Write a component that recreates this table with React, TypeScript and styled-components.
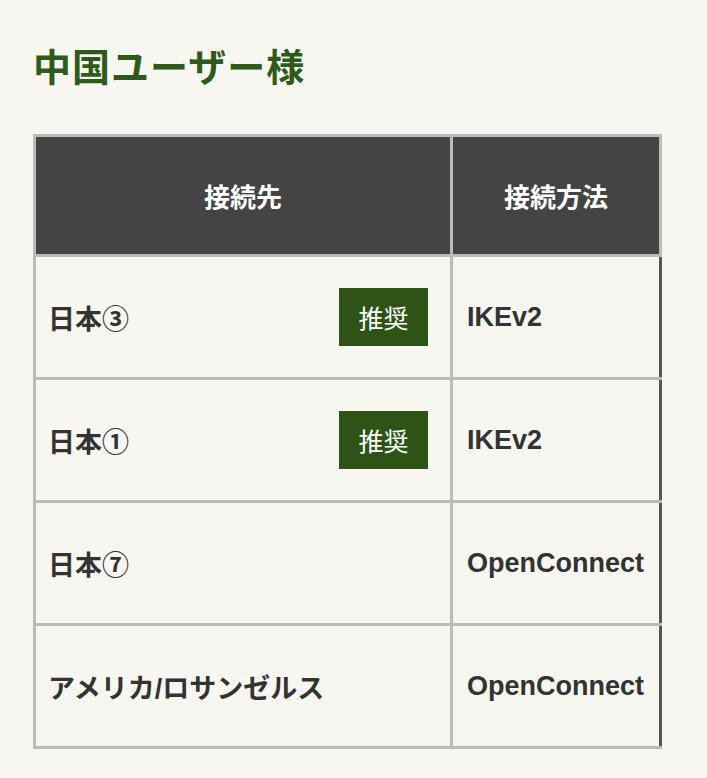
import React from "react";
import styled, { createGlobalStyle } from "styled-components";

const GlobalStyle = createGlobalStyle`
    html, body {
        margin: 0;
        padding: 0;
        background: #f7f6f1;
    }
    body {
        font-family: "Liberation Sans", "Noto Sans CJK JP", sans-serif;
        color: #333;
    }
`;

const Page = styled.div`
    padding: 42px 33px 30px 33px;
`;

const Title = styled.h2`
    margin: 0 0 40px 0;
    font-size: 38px;
    line-height: 52px;
    font-weight: bold;
    color: #2e5a1b;
    letter-spacing: 1px;
`;

const Table = styled.table`
    border-collapse: collapse;
    width: 620px;
    table-layout: fixed;
`;

const HeadCell = styled.th<{ $w: number }>`
    width: ${props => props.$w}px;
    height: 117px;
    background: #444;
    color: #fff;
    font-size: 26px;
    font-weight: bold;
    text-align: center;
    border: 3px solid #bbb;
    padding: 0;
`;

const Cell = styled.td<{ $last?: boolean }>`
    height: 120px;
    border: 3px solid #bbb;
    border-right-color: ${props => props.$last ? "#555" : "#bbb"};
    padding: 0 22px 0 ${props => props.$last ? 14 : 12}px;
    font-size: 27px;
    font-weight: bold;
    color: #333;
    vertical-align: middle;
`;

const PlaceRow = styled.div`
    display: flex;
    align-items: center;
    justify-content: space-between;
`;

const Badge = styled.span`
    display: inline-flex;
    align-items: center;
    justify-content: center;
    width: 89px;
    height: 58px;
    background: #2d5416;
    color: #fff;
    font-size: 25px;
    font-weight: normal;
`;

const Method = styled.span`
    font-size: 27px;
`;

const ROWS = [
    { place: "日本③", recommended: true, method: "IKEv2" },
    { place: "日本①", recommended: true, method: "IKEv2" },
    { place: "日本⑦", recommended: false, method: "OpenConnect" },
    { place: "アメリカ/ロサンゼルス", recommended: false, method: "OpenConnect" },
];

const App = () => (
    <Page>
        <GlobalStyle />
        <Title>中国ユーザー様</Title>
        <Table>
            <thead>
                <tr>
                    <HeadCell $w={414}>接続先</HeadCell>
                    <HeadCell $w={206}>接続方法</HeadCell>
                </tr>
            </thead>
            <tbody>
                {ROWS.map(row => (
                    <tr key={row.place}>
                        <Cell>
                            <PlaceRow>
                                <span>{row.place}</span>
                                {row.recommended ? <Badge>推奨</Badge> : null}
                            </PlaceRow>
                        </Cell>
                        <Cell $last>
                            <Method>{row.method}</Method>
                        </Cell>
                    </tr>
                ))}
            </tbody>
        </Table>
    </Page>
);

export default App;
